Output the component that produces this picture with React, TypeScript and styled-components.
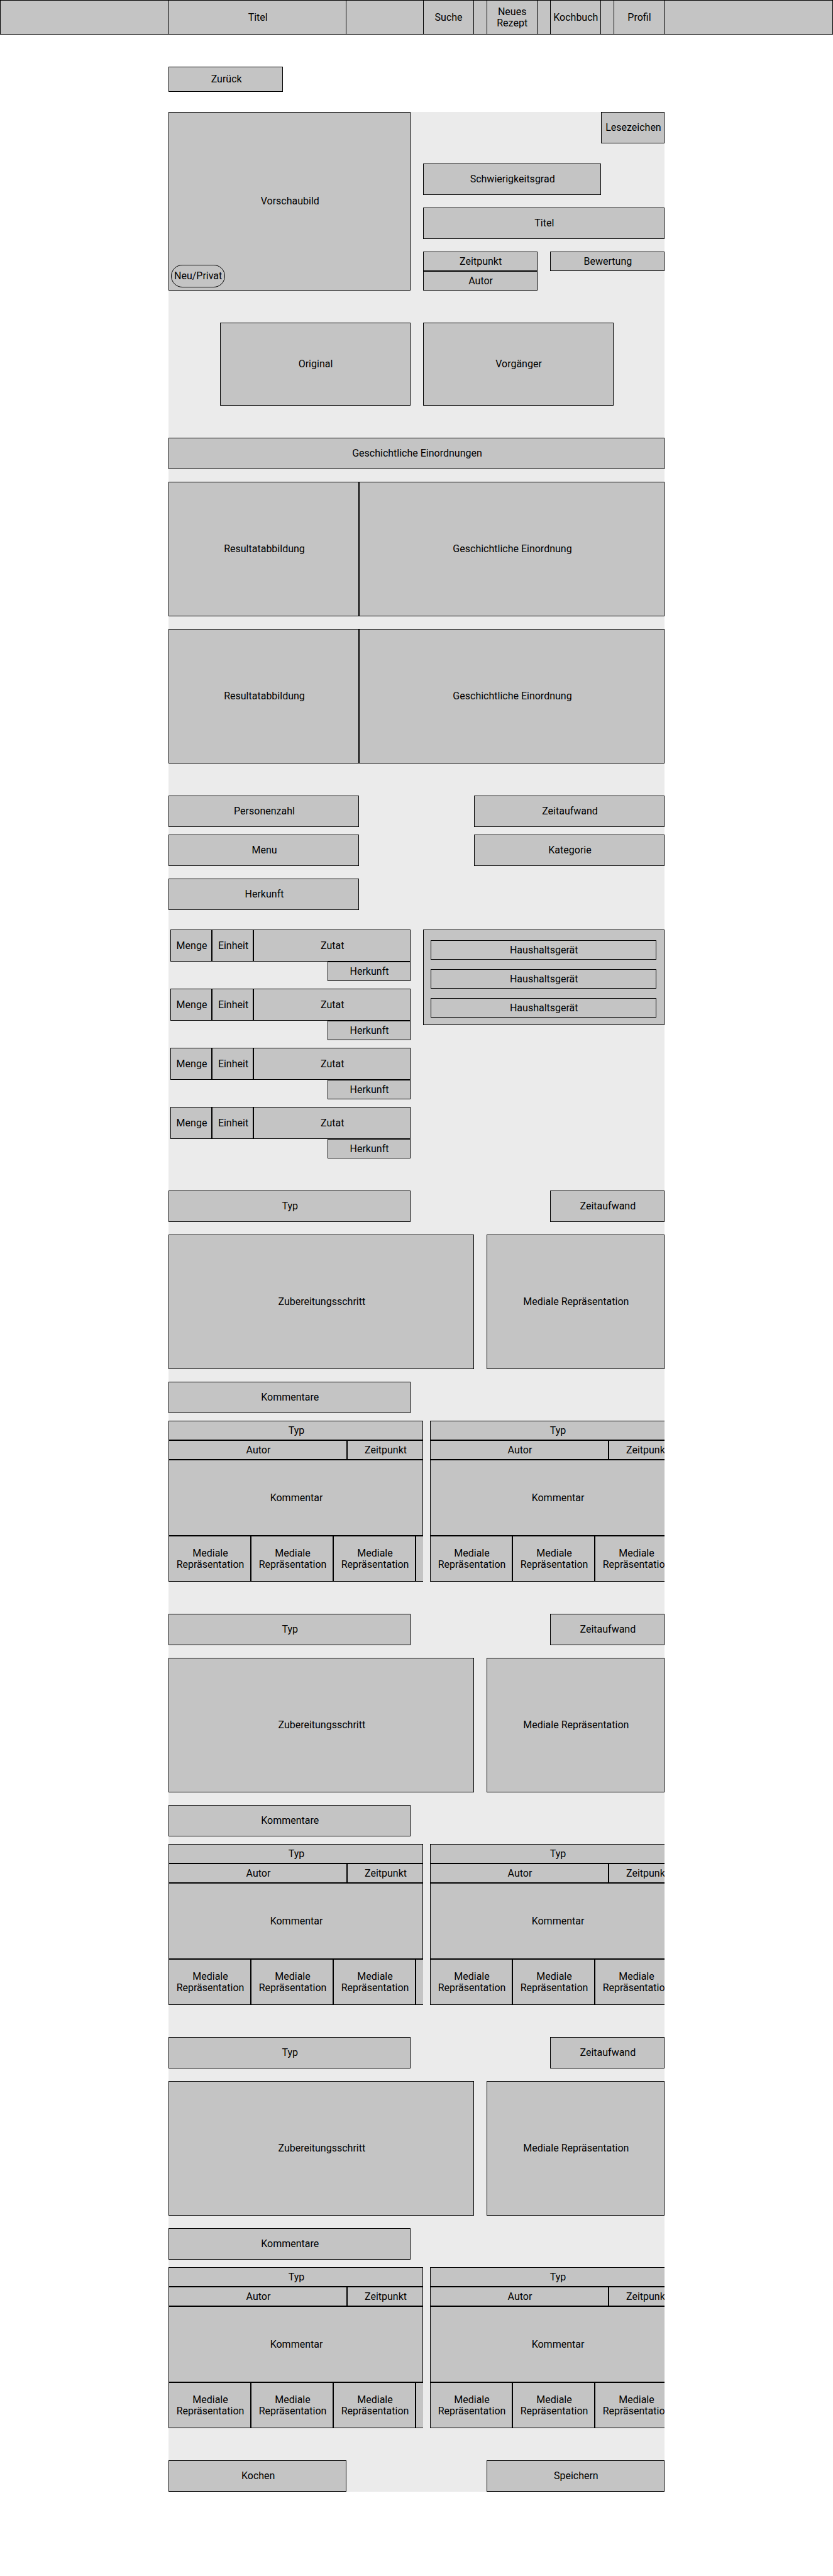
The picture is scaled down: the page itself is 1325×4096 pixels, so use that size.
import React from "react";
import styled, { createGlobalStyle, css } from "styled-components";

const GlobalStyle = createGlobalStyle`
  *, *::before, *::after { box-sizing: border-box; }
  body {
    margin: 0;
    background: #fff;
    color: #000;
    font-family: Roboto, "Liberation Sans", sans-serif;
    font-size: 16px;
    line-height: 18px;
  }
`;

const HEIGHTS = {
  slim: 31,
  back: 40,
  line: 50,
  row: 51,
  media: 73,
  comment: 121,
  link: 132,
  panel: 214,
  hero: 284,
};

type Size = keyof typeof HEIGHTS;

const box = css<{ $size: Size }>`
  display: flex;
  align-items: center;
  justify-content: center;
  min-width: 0;
  min-height: ${({ $size }) => HEIGHTS[$size]}px;
  margin: 0;
  padding: 0 0 0 2px;
  border: 1px solid #000;
  border-radius: 0;
  background: #c4c4c4;
  color: #000;
  font: inherit;
  text-align: center;
  text-decoration: none;
`;

const Field = styled.div<{ $size: Size }>`
  ${box}
`;

const Heading = styled.h2<{ $size: Size }>`
  ${box}
`;

const ActionButton = styled.button<{ $size: Size }>`
  ${box}
  cursor: pointer;
`;

const CardLink = styled.a<{ $size: Size }>`
  ${box}
`;

const columns = css`
  display: grid;
  grid-template-columns: repeat(8, minmax(0, 1fr));
  column-gap: 20px;
`;

const container = css`
  width: 100%;
  max-width: 789px;
  margin: 0 auto;
`;

const Header = styled.header`
  height: 55px;
  border: 1px solid #000;
  background: #c4c4c4;
`;

const HeaderGrid = styled.nav`
  ${columns}
  ${container}
  height: 100%;
`;

const HeaderItem = styled.a<{ $column: string }>`
  grid-column: ${({ $column }) => $column};
  display: flex;
  align-items: center;
  justify-content: center;
  padding-left: 1px;
  border: solid #000;
  border-width: 0 1px;
  color: inherit;
  text-align: center;
  text-decoration: none;
`;

const BackBar = styled.div`
  ${columns}
  ${container}
  padding: 51px 0 32px;
`;

const Span = styled.div<{ $column: string }>`
  grid-column: ${({ $column }) => $column};
  display: grid;
`;

const Recipe = styled.main`
  ${container}
  display: flex;
  flex-direction: column;
  gap: 51px;
  background: #ebebeb;
`;

const Page = styled.div`
  padding-bottom: 133px;
`;

const Row = styled.div`
  ${columns}
`;

const Preview = styled.div`
  grid-column: 1 / 5;
  position: relative;
  display: grid;
`;

const Badge = styled.span`
  position: absolute;
  left: 4px;
  bottom: 5px;
  padding: 8px 4px;
  border: 1px solid #000;
  border-radius: 18px;
  white-space: nowrap;
`;

const Summary = styled.div`
  grid-column: 5 / 9;
  display: grid;
  grid-template-columns: repeat(4, minmax(0, 1fr));
  column-gap: 20px;
  align-content: space-between;
`;

const BookmarkSlot = styled.div`
  grid-column: 4;
  display: grid;
  margin-left: -20px;
  margin-bottom: 12px;
`;

const Related = styled.div`
  display: grid;
  grid-template-columns: 303px 303px;
  column-gap: 20px;
  justify-content: center;
`;

const History = styled.section`
  display: flex;
  flex-direction: column;
  gap: 20px;
`;

const HistoryEntry = styled.article`
  display: grid;
  grid-template-columns: 303px minmax(0, 1fr);
`;

const Details = styled.section`
  display: flex;
  flex-direction: column;
  gap: 31px;
`;

const Facts = styled.div`
  display: grid;
  grid-template-columns: 303px 303px;
  justify-content: space-between;
  row-gap: 12px;
`;

const Origin = styled.div`
  grid-column: 1;
  display: grid;
  padding-top: 8px;
`;

const Ingredients = styled.ul`
  grid-column: 1 / 5;
  display: flex;
  flex-direction: column;
  gap: 12px;
  margin: 0;
  padding: 0 0 0 3px;
  list-style: none;
`;

const Ingredient = styled.li`
  display: grid;
  grid-template-columns: 66px 66px minmax(0, 1fr);
`;

const IngredientOrigin = styled.div`
  grid-column: 1 / -1;
  justify-self: end;
  display: grid;
  width: 132px;
`;

const Appliances = styled.ul`
  grid-column: 5 / 9;
  align-self: start;
  display: flex;
  flex-direction: column;
  gap: 15px;
  margin: 0;
  padding: 16px 12px 11px 11px;
  border: 1px solid #000;
  background: #c4c4c4;
  list-style: none;
`;

const Step = styled.section`
  display: flex;
  flex-direction: column;
  gap: 20px;
`;

const CommentSection = styled.div`
  display: flex;
  flex-direction: column;
  gap: 12px;
`;

const CommentStrip = styled.div`
  display: flex;
  gap: 11px;
  overflow: hidden;
`;

const Comment = styled.article`
  flex: 0 0 405px;
  display: grid;
`;

const CommentMeta = styled.div`
  display: grid;
  grid-template-columns: 284px minmax(0, 1fr);
`;

const MediaStrip = styled.div`
  display: grid;
  grid-template-columns: repeat(4, 131px);
  overflow: hidden;
`;

function CommentCard() {
  return (
    <Comment>
      <Field $size="slim">Typ</Field>
      <CommentMeta>
        <Field $size="slim">Autor</Field>
        <Field $size="slim">Zeitpunkt</Field>
      </CommentMeta>
      <Field $size="comment">Kommentar</Field>
      <MediaStrip>
        {[0, 1, 2].map((item) => (
          <Field key={item} $size="media">
            Mediale
            <br />
            Repräsentation
          </Field>
        ))}
        <Field $size="media" />
      </MediaStrip>
    </Comment>
  );
}

function PreparationStep() {
  return (
    <Step>
      <Row>
        <Span $column="1 / 5">
          <Heading $size="line">Typ</Heading>
        </Span>
        <Span $column="7 / 9">
          <Field $size="line">Zeitaufwand</Field>
        </Span>
      </Row>
      <Row>
        <Span $column="1 / 6">
          <Field $size="panel">Zubereitungsschritt</Field>
        </Span>
        <Span $column="6 / 9">
          <Field $size="panel">Mediale Repräsentation</Field>
        </Span>
      </Row>
      <CommentSection>
        <Row>
          <Span $column="1 / 5">
            <Heading $size="line">Kommentare</Heading>
          </Span>
        </Row>
        <CommentStrip>
          <CommentCard />
          <CommentCard />
        </CommentStrip>
      </CommentSection>
    </Step>
  );
}

export default function App() {
  return (
    <Page>
      <GlobalStyle />
      <Header>
        <HeaderGrid>
          <HeaderItem href="#" $column="1 / 4">Titel</HeaderItem>
          <HeaderItem href="#suche" $column="5">Suche</HeaderItem>
          <HeaderItem href="#neu" $column="6">
            Neues
            <br />
            Rezept
          </HeaderItem>
          <HeaderItem href="#kochbuch" $column="7">Kochbuch</HeaderItem>
          <HeaderItem href="#profil" $column="8">Profil</HeaderItem>
        </HeaderGrid>
      </Header>

      <BackBar>
        <Span $column="1 / 3">
          <ActionButton type="button" $size="back">Zurück</ActionButton>
        </Span>
      </BackBar>

      <Recipe>
        <Row>
          <Preview>
            <Field $size="hero">Vorschaubild</Field>
            <Badge>Neu/Privat</Badge>
          </Preview>
          <Summary>
            <BookmarkSlot>
              <ActionButton type="button" $size="line">Lesezeichen</ActionButton>
            </BookmarkSlot>
            <Span $column="1 / 4">
              <Field $size="line">Schwierigkeitsgrad</Field>
            </Span>
            <Span $column="1 / 5">
              <Field $size="line">Titel</Field>
            </Span>
            <Span $column="1 / 3">
              <Field $size="slim">Zeitpunkt</Field>
              <Field $size="slim">Autor</Field>
            </Span>
            <Span $column="3 / 5">
              <div>
                <Field $size="slim">Bewertung</Field>
              </div>
            </Span>
          </Summary>
        </Row>

        <Related>
          <CardLink href="#original" $size="link">Original</CardLink>
          <CardLink href="#vorgaenger" $size="link">Vorgänger</CardLink>
        </Related>

        <History>
          <Heading $size="line">Geschichtliche Einordnungen</Heading>
          {[0, 1].map((entry) => (
            <HistoryEntry key={entry}>
              <Field $size="panel">Resultatabbildung</Field>
              <Field $size="panel">Geschichtliche Einordnung</Field>
            </HistoryEntry>
          ))}
        </History>

        <Details>
          <Facts>
            <Field $size="line">Personenzahl</Field>
            <Field $size="line">Zeitaufwand</Field>
            <Field $size="line">Menu</Field>
            <Field $size="line">Kategorie</Field>
            <Origin>
              <Field $size="line">Herkunft</Field>
            </Origin>
          </Facts>
          <Row>
            <Ingredients>
              {[0, 1, 2, 3].map((item) => (
                <Ingredient key={item}>
                  <Field $size="row">Menge</Field>
                  <Field $size="row">Einheit</Field>
                  <Field $size="row">Zutat</Field>
                  <IngredientOrigin>
                    <Field $size="slim">Herkunft</Field>
                  </IngredientOrigin>
                </Ingredient>
              ))}
            </Ingredients>
            <Appliances>
              {[0, 1, 2].map((item) => (
                <Field as="li" key={item} $size="slim">Haushaltsgerät</Field>
              ))}
            </Appliances>
          </Row>
        </Details>

        {[0, 1, 2].map((step) => (
          <PreparationStep key={step} />
        ))}

        <Row>
          <Span $column="1 / 4">
            <ActionButton type="button" $size="line">Kochen</ActionButton>
          </Span>
          <Span $column="6 / 9">
            <ActionButton type="button" $size="line">Speichern</ActionButton>
          </Span>
        </Row>
      </Recipe>
    </Page>
  );
}
